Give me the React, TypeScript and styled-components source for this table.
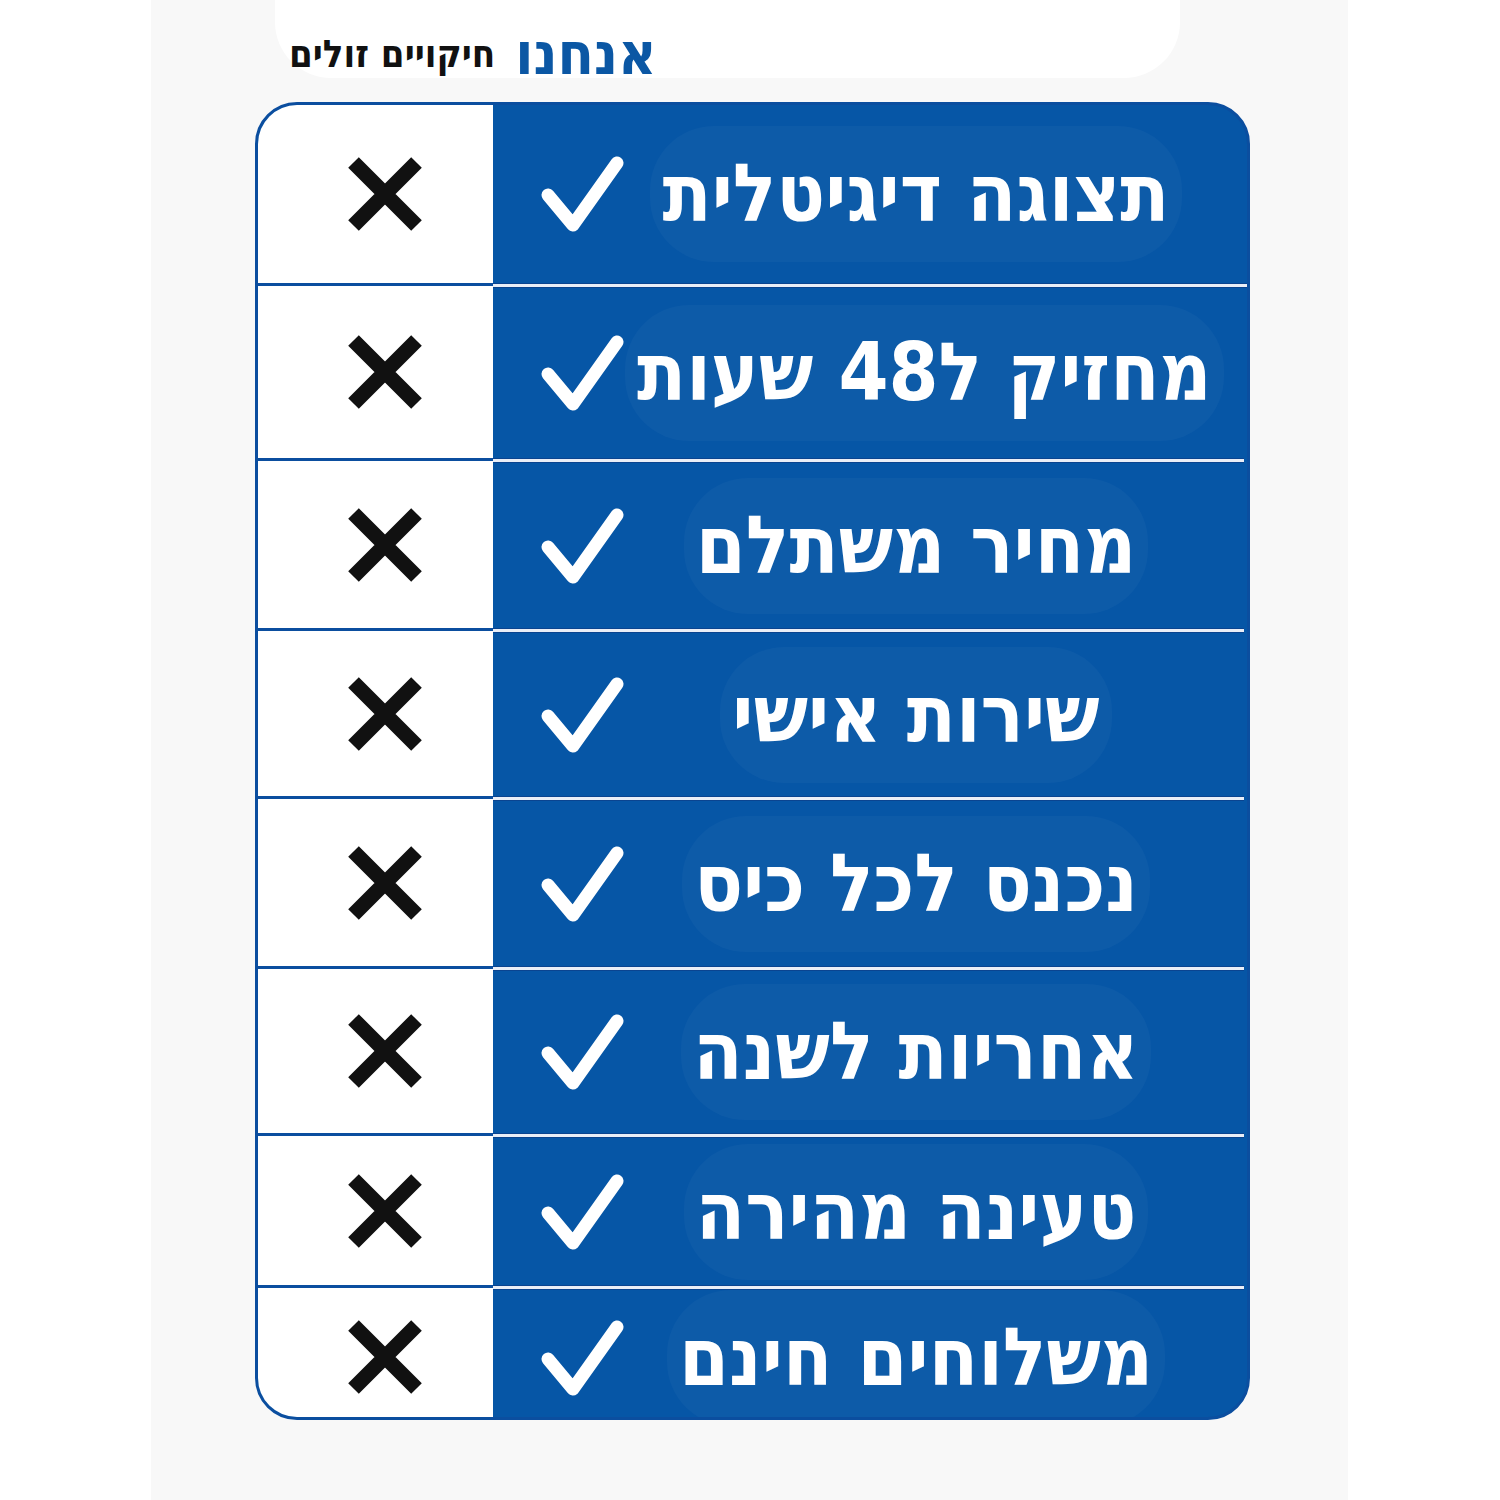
import React from "react";
import styled, { createGlobalStyle } from "styled-components";

type Feature = {
  label: string;
  height: number;
};

const features: Feature[] = [
  { label: "תצוגה דיגיטלית", height: 178 },
  { label: "מחזיק ל48 שעות", height: 175 },
  { label: "מחיר משתלם", height: 170 },
  { label: "שירות אישי", height: 168 },
  { label: "נכנס לכל כיס", height: 170 },
  { label: "אחריות לשנה", height: 167 },
  { label: "טעינה מהירה", height: 152 },
  { label: "משלוחים חינם", height: 132 },
];

const GlobalStyle = createGlobalStyle`
  html, body {
    margin: 0;
    padding: 0;
    background: #ffffff;
  }
  body {
    font-family: "DejaVu Sans Condensed", "DejaVu Sans", sans-serif;
  }
`;

const Page = styled.div`
  width: 1500px;
  height: 1500px;
  padding-left: 151px;
  box-sizing: border-box;
  background: #ffffff;
`;

const Sheet = styled.div`
  width: 1197px;
  height: 100%;
  background: #f8f8f8;
  display: flex;
  flex-direction: column;
  align-items: flex-start;
`;

const TopPanel = styled.div`
  margin-left: 124px;
  width: 905px;
  height: 78px;
  box-sizing: border-box;
  padding: 0 0 0 14px;
  background: #ffffff;
  border-radius: 0 0 56px 56px;
  display: flex;
  align-items: flex-end;
`;

const Heading = styled.div`
  direction: rtl;
  display: flex;
  align-items: center;
  gap: 20px;
  margin-bottom: -5px;
  font-weight: 700;
  line-height: 1;
`;

const Brand = styled.span`
  color: #0b57a4;
  font-size: 59px;
`;

const Tagline = styled.span`
  color: #111111;
  font-size: 38px;
`;

const Table = styled.div`
  margin: 24px 0 0 104px;
  width: 995px;
  box-sizing: border-box;
  border: 3px solid #0b4e9f;
  border-radius: 42px;
  overflow: hidden;
  background: #0656a6;
  display: flex;
  flex-direction: column;
`;

const Row = styled.div<{ $h: number }>`
  display: grid;
  grid-template-columns: 235px 1fr;
  height: ${(p) => p.$h}px;
`;

const CrossCell = styled.div<{ $first: boolean }>`
  background: #ffffff;
  border-top: ${(p) => (p.$first ? "none" : "3px solid #0b4e9f")};
  display: flex;
  align-items: center;
  justify-content: center;
  padding-left: 18px;
`;

const FeatureCell = styled.div`
  display: flex;
  flex-direction: column;
`;

const Divider = styled.div<{ $hidden: boolean }>`
  height: 5px;
  margin-right: 3px;
  flex: none;
  display: ${(p) => (p.$hidden ? "none" : "block")};
  background: linear-gradient(#0a4490 0 1px, #e9eef7 1px 4px, #0a4490 4px 5px);
`;

const FeatureBody = styled.div`
  flex: 1;
  display: grid;
  grid-template-columns: 84px 1fr;
  align-items: center;
  padding: 0 40px 0 48px;
`;

const Label = styled.div`
  justify-self: center;
  direction: rtl;
  padding: 28px 12px;
  border-radius: 64px;
  background: rgba(255, 255, 255, 0.03);
  color: #ffffff;
  font-size: 80px;
  font-weight: 700;
  line-height: 1;
  white-space: nowrap;
`;

const Cross = () => (
  <svg width="74" height="74" viewBox="0 0 74 74">
    <path d="M5.5 5.5 L68.5 68.5 M68.5 5.5 L5.5 68.5" stroke="#111" strokeWidth="15" />
  </svg>
);

const Check = () => (
  <svg width="84" height="76" viewBox="0 0 84 76">
    <path
      d="M7 39 L32 69 L76 7"
      fill="none"
      stroke="#fff"
      strokeWidth="13"
      strokeLinecap="round"
      strokeLinejoin="round"
    />
  </svg>
);

export default function App() {
  return (
    <Page>
      <GlobalStyle />
      <Sheet>
        <TopPanel>
          <Heading>
            <Brand>אנחנו</Brand>
            <Tagline>חיקויים זולים</Tagline>
          </Heading>
        </TopPanel>
        <Table>
          {features.map((f, i) => (
            <Row key={f.label} $h={f.height}>
              <CrossCell $first={i === 0}>
                <Cross />
              </CrossCell>
              <FeatureCell>
                <Divider $hidden={i === 0} />
                <FeatureBody>
                  <Check />
                  <Label>{f.label}</Label>
                </FeatureBody>
              </FeatureCell>
            </Row>
          ))}
        </Table>
      </Sheet>
    </Page>
  );
}
